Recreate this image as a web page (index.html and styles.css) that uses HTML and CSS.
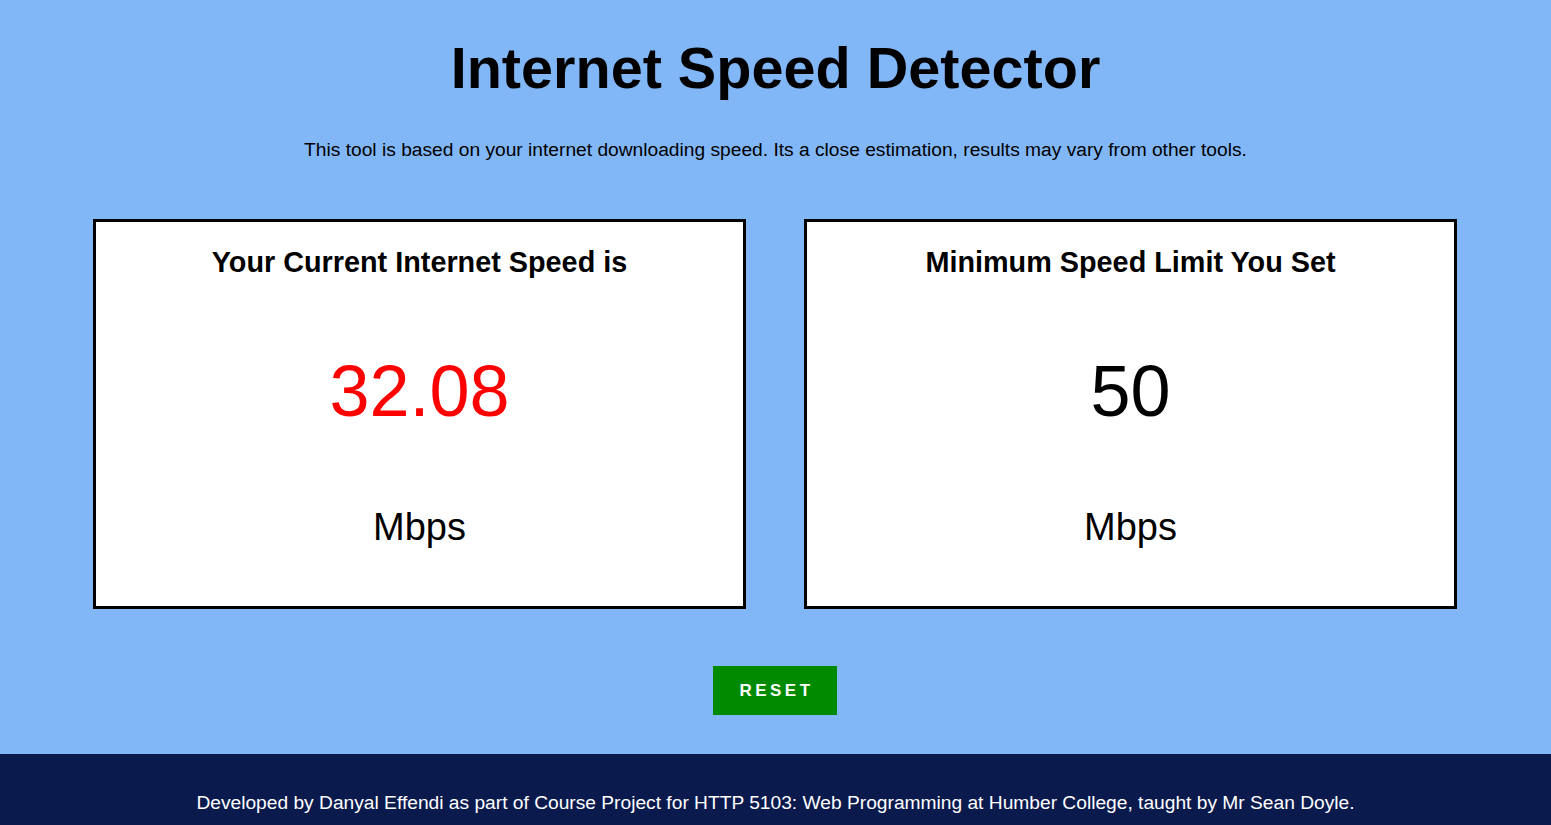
FILE: index.html
```html
<!DOCTYPE html>
<html lang="en">
<head>
  <meta charset="utf-8">
  <title>Internet Speed Detector</title>
  <link rel="stylesheet" href="styles.css">
</head>
<body>
  <div class="main">
    <h1 class="title">Internet Speed Detector</h1>
    <p class="intro">This tool is based on your internet downloading speed. Its a close estimation, results may vary from other tools.</p>

    <div class="boxes">
      <div class="box">
        <h3 class="box-title">Your Current Internet Speed is</h3>
        <div class="speed low" id="current">32.08</div>
        <div class="unit">Mbps</div>
      </div>
      <div class="box">
        <h3 class="box-title">Minimum Speed Limit You Set</h3>
        <div class="speed" id="limit">50</div>
        <div class="unit">Mbps</div>
      </div>
    </div>

    <div class="actions">
      <button class="reset" type="button">RESET</button>
    </div>
  </div>

  <footer class="footer">
    <p>Developed by Danyal Effendi as part of Course Project for HTTP 5103: Web Programming at Humber College, taught by Mr Sean Doyle.</p>
  </footer>
</body>
</html>
```

FILE: styles.css
```css
html, body { margin: 0; padding: 0; }
body {
  font-family: Arial, "Liberation Sans", sans-serif;
  background: #82b7f7;
  color: #000;
}
.main {
  padding-top: 35px;
  padding-bottom: 39px;
  text-align: center;
}
.title {
  margin: 0;
  font-size: 57.6px;
  font-weight: bold;
  line-height: normal;
}
.intro {
  margin: 38px 0 0;
  font-size: 19.2px;
}
.boxes {
  display: flex;
  justify-content: center;
  gap: 58px;
  margin-top: 58px;
  padding-right: 1px;
}
.box {
  width: 647px;
  background: #fff;
  border: solid 3px #000;
  padding: 24px 0 57px;
}
.box-title {
  margin: 0;
  font-size: 28.8px;
  font-weight: bold;
}
.speed {
  margin-top: 71px;
  font-size: 72px;
  line-height: normal;
}
.speed.low { color: #ff0000; }
.unit {
  margin-top: 74px;
  font-size: 38px;
  line-height: normal;
}
.actions {
  margin-top: 57px;
  padding-right: 1px;
}
.reset {
  width: 124px;
  height: 49px;
  border: none;
  background: #008a00;
  color: #fff;
  font-family: Arial, "Liberation Sans", sans-serif;
  font-size: 17px;
  font-weight: bold;
  letter-spacing: 3.5px;
  padding: 0 0 0 3px;
  cursor: pointer;
}
.footer {
  background: #0b1a4d;
  color: #fff;
  text-align: center;
  padding: 38px 0 30px;
}
.footer p {
  margin: 0;
  font-size: 19.2px;
}
```
